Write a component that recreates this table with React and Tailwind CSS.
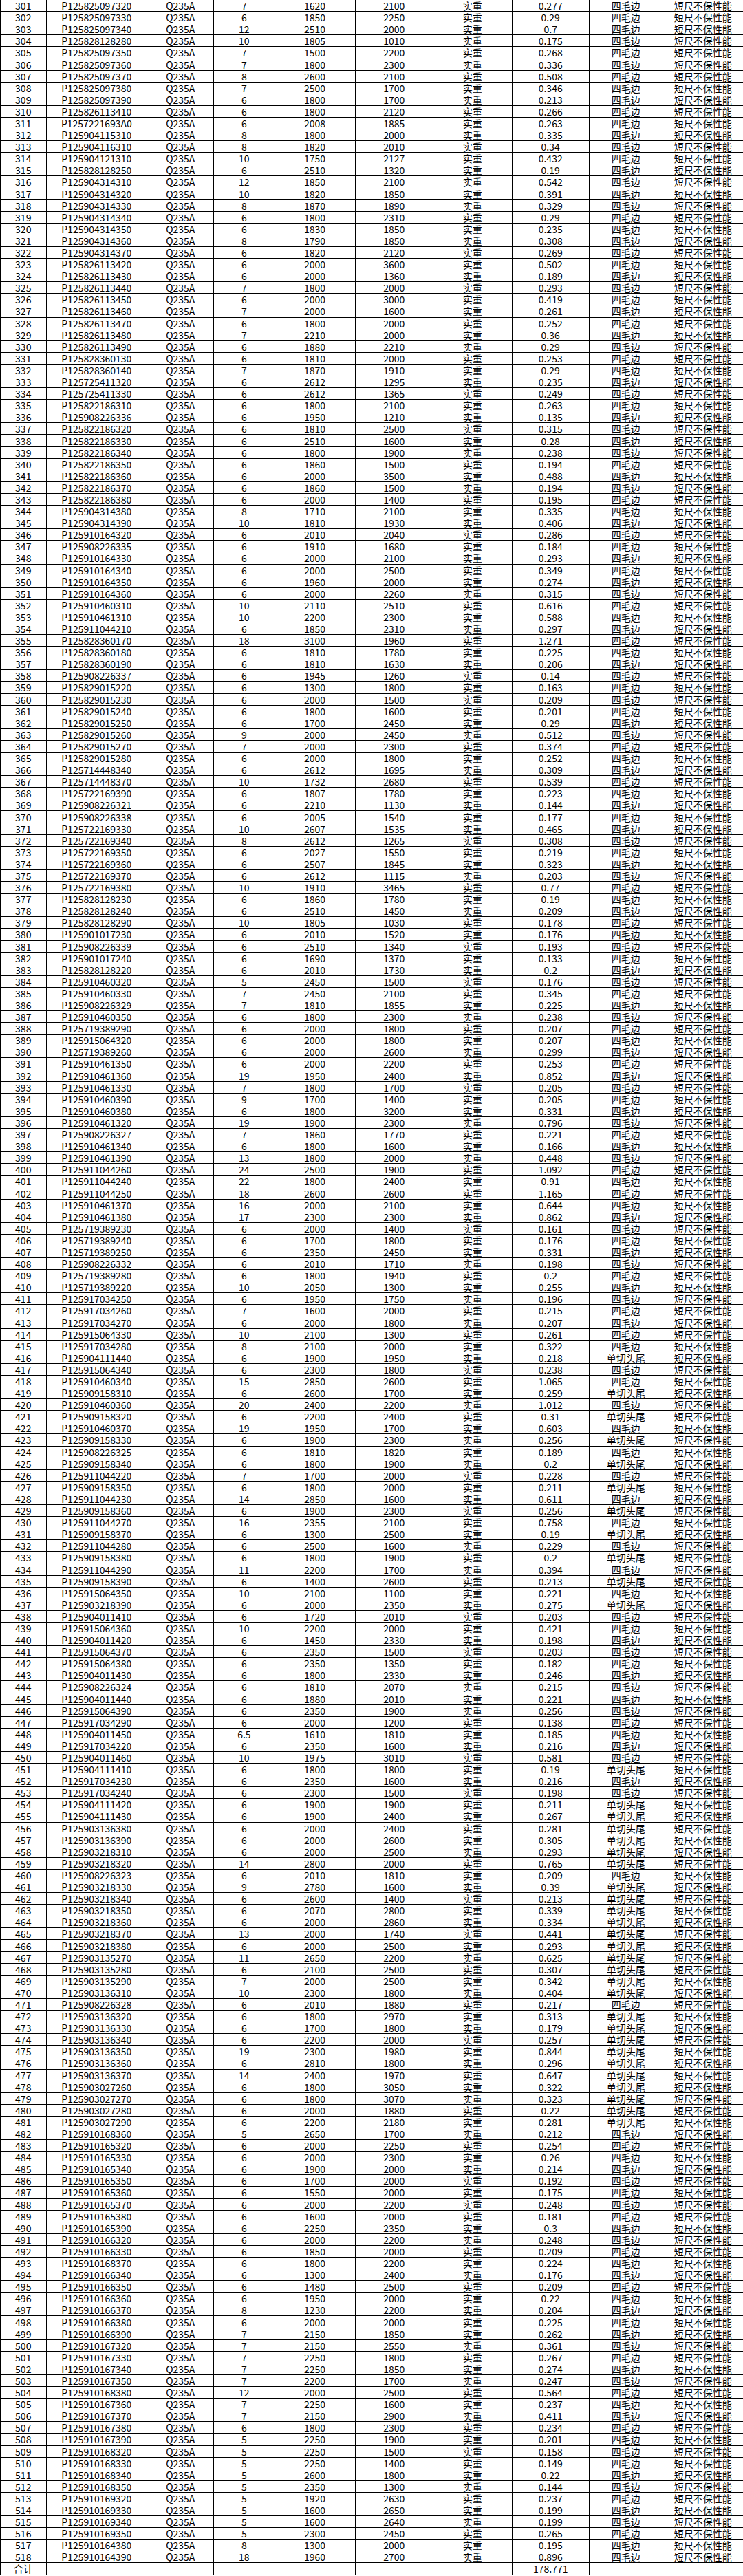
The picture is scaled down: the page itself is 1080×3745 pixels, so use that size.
import React from 'react';

// code qty length width weight edge(0 = 四毛边, 1 = 单切头尾), numbered from 301
const RAW = `P125825097320 7 1620 2100 0.277 0
P125825097330 6 1850 2250 0.29 0
P125825097340 12 2510 2000 0.7 0
P125828128280 10 1805 1010 0.175 0
P125825097350 7 1500 2200 0.268 0
P125825097360 7 1800 2300 0.336 0
P125825097370 8 2600 2100 0.508 0
P125825097380 7 2500 1700 0.346 0
P125825097390 6 1800 1700 0.213 0
P125826113410 6 1800 2120 0.266 0
P1257221693A0 6 2008 1885 0.263 0
P125904115310 8 1800 2000 0.335 0
P125904116310 8 1820 2010 0.34 0
P125904121310 10 1750 2127 0.432 0
P125828128250 6 2510 1320 0.19 0
P125904314310 12 1850 2100 0.542 0
P125904314320 10 1820 1850 0.391 0
P125904314330 8 1870 1890 0.329 0
P125904314340 6 1800 2310 0.29 0
P125904314350 6 1830 1850 0.235 0
P125904314360 8 1790 1850 0.308 0
P125904314370 6 1820 2120 0.269 0
P125826113420 6 2000 3600 0.502 0
P125826113430 6 2000 1360 0.189 0
P125826113440 7 1800 2000 0.293 0
P125826113450 6 2000 3000 0.419 0
P125826113460 7 2000 1600 0.261 0
P125826113470 6 1800 2000 0.252 0
P125826113480 7 2210 2000 0.36 0
P125826113490 6 1880 2210 0.29 0
P125828360130 6 1810 2000 0.253 0
P125828360140 7 1870 1910 0.29 0
P125725411320 6 2612 1295 0.235 0
P125725411330 6 2612 1365 0.249 0
P125822186310 6 1800 2100 0.263 0
P125908226336 6 1950 1210 0.135 0
P125822186320 6 1810 2500 0.315 0
P125822186330 6 2510 1600 0.28 0
P125822186340 6 1800 1900 0.238 0
P125822186350 6 1860 1500 0.194 0
P125822186360 6 2000 3500 0.488 0
P125822186370 6 1860 1500 0.194 0
P125822186380 6 2000 1400 0.195 0
P125904314380 8 1710 2100 0.335 0
P125904314390 10 1810 1930 0.406 0
P125910164320 6 2010 2040 0.286 0
P125908226335 6 1910 1680 0.184 0
P125910164330 6 2000 2100 0.293 0
P125910164340 6 2000 2500 0.349 0
P125910164350 6 1960 2000 0.274 0
P125910164360 6 2000 2260 0.315 0
P125910460310 10 2110 2510 0.616 0
P125910461310 10 2200 2300 0.588 0
P125911044210 6 1850 2310 0.297 0
P125828360170 18 3100 1960 1.271 0
P125828360180 6 1810 1780 0.225 0
P125828360190 6 1810 1630 0.206 0
P125908226337 6 1945 1260 0.14 0
P125829015220 6 1300 1800 0.163 0
P125829015230 6 2000 1500 0.209 0
P125829015240 6 1800 1600 0.201 0
P125829015250 6 1700 2450 0.29 0
P125829015260 9 2000 2450 0.512 0
P125829015270 7 2000 2300 0.374 0
P125829015280 6 2000 1800 0.252 0
P125714448340 6 2612 1695 0.309 0
P125714448370 10 1732 2680 0.539 0
P125722169390 6 1807 1780 0.223 0
P125908226321 6 2210 1130 0.144 0
P125908226338 6 2005 1540 0.177 0
P125722169330 10 2607 1535 0.465 0
P125722169340 8 2612 1265 0.308 0
P125722169350 6 2027 1550 0.219 0
P125722169360 6 2507 1845 0.323 0
P125722169370 6 2612 1115 0.203 0
P125722169380 10 1910 3465 0.77 0
P125828128230 6 1860 1780 0.19 0
P125828128240 6 2510 1450 0.209 0
P125828128290 10 1805 1030 0.178 0
P125901017230 6 2010 1520 0.176 0
P125908226339 6 2510 1340 0.193 0
P125901017240 6 1690 1370 0.133 0
P125828128220 6 2010 1730 0.2 0
P125910460320 5 2450 1500 0.176 0
P125910460330 7 2450 2100 0.345 0
P125908226329 7 1810 1855 0.225 0
P125910460350 6 1800 2300 0.238 0
P125719389290 6 2000 1800 0.207 0
P125915064320 6 2000 1800 0.207 0
P125719389260 6 2000 2600 0.299 0
P125910461350 6 2000 2200 0.253 0
P125910461360 19 1950 2400 0.852 0
P125910461330 7 1800 1700 0.205 0
P125910460390 9 1700 1400 0.205 0
P125910460380 6 1800 3200 0.331 0
P125910461320 19 1900 2300 0.796 0
P125908226327 7 1860 1770 0.221 0
P125910461340 6 1800 1600 0.166 0
P125910461390 13 1800 2000 0.448 0
P125911044260 24 2500 1900 1.092 0
P125911044240 22 1800 2400 0.91 0
P125911044250 18 2600 2600 1.165 0
P125910461370 16 2000 2100 0.644 0
P125910461380 17 2300 2300 0.862 0
P125719389230 6 2000 1400 0.161 0
P125719389240 6 1700 1800 0.176 0
P125719389250 6 2350 2450 0.331 0
P125908226332 6 2010 1710 0.198 0
P125719389280 6 1800 1940 0.2 0
P125719389220 10 2050 1300 0.255 0
P125917034250 6 1950 1750 0.196 0
P125917034260 7 1600 2000 0.215 0
P125917034270 6 2000 1800 0.207 0
P125915064330 10 2100 1300 0.261 0
P125917034280 8 2100 2000 0.322 0
P125904111440 6 1900 1950 0.218 1
P125915064340 6 2300 1800 0.238 0
P125910460340 15 2850 2600 1.065 0
P125909158310 6 2600 1700 0.259 1
P125910460360 20 2400 2200 1.012 0
P125909158320 6 2200 2400 0.31 1
P125910460370 19 1950 1700 0.603 0
P125909158330 6 1900 2300 0.256 1
P125908226325 6 1810 1820 0.189 0
P125909158340 6 1800 1900 0.2 1
P125911044220 7 1700 2000 0.228 0
P125909158350 6 1800 2000 0.211 1
P125911044230 14 2850 1600 0.611 0
P125909158360 6 1900 2300 0.256 1
P125911044270 16 2355 2100 0.758 0
P125909158370 6 1300 2500 0.19 1
P125911044280 6 2500 1600 0.229 0
P125909158380 6 1800 1900 0.2 1
P125911044290 11 2200 1700 0.394 0
P125909158390 6 1400 2600 0.213 1
P125915064350 10 2100 1100 0.221 0
P125903218390 6 2000 2350 0.275 1
P125904011410 6 1720 2010 0.203 0
P125915064360 10 2200 2000 0.421 0
P125904011420 6 1450 2330 0.198 0
P125915064370 6 2350 1500 0.203 0
P125915064380 6 2350 1350 0.182 0
P125904011430 6 1800 2330 0.246 0
P125908226324 6 1810 2070 0.215 0
P125904011440 6 1880 2010 0.221 0
P125915064390 6 2350 1900 0.256 0
P125917034290 6 2000 1200 0.138 0
P125904011450 6.5 1610 1810 0.185 0
P125917034220 6 2350 1600 0.216 0
P125904011460 10 1975 3010 0.581 0
P125904111410 6 1800 1800 0.19 1
P125917034230 6 2350 1600 0.216 0
P125917034240 6 2300 1500 0.198 0
P125904111420 6 1900 1900 0.211 1
P125904111430 6 1900 2400 0.267 1
P125903136380 6 2000 2400 0.281 1
P125903136390 6 2000 2600 0.305 1
P125903218310 6 2000 2500 0.293 1
P125903218320 14 2800 2000 0.765 1
P125908226323 6 2010 1810 0.209 0
P125903218330 9 2780 1600 0.39 1
P125903218340 6 2600 1400 0.213 1
P125903218350 6 2070 2800 0.339 1
P125903218360 6 2000 2860 0.334 1
P125903218370 13 2000 1740 0.441 1
P125903218380 6 2000 2500 0.293 1
P125903135270 11 2650 2200 0.625 1
P125903135280 6 2100 2500 0.307 1
P125903135290 7 2000 2500 0.342 1
P125903136310 10 2300 1800 0.404 1
P125908226328 6 2010 1880 0.217 0
P125903136320 6 1800 2970 0.313 1
P125903136330 6 1700 1800 0.179 1
P125903136340 6 2200 2000 0.257 1
P125903136350 19 2300 1980 0.844 1
P125903136360 6 2810 1800 0.296 1
P125903136370 14 2400 1970 0.647 1
P125903027260 6 1800 3050 0.322 1
P125903027270 6 1800 3070 0.323 1
P125903027280 6 2000 1880 0.22 1
P125903027290 6 2200 2180 0.281 1
P125910168360 5 2650 1700 0.212 0
P125910165320 6 2000 2250 0.254 0
P125910165330 6 2000 2300 0.26 0
P125910165340 6 1900 2000 0.214 0
P125910165350 6 1700 2000 0.192 0
P125910165360 6 1550 2000 0.175 0
P125910165370 6 2000 2200 0.248 0
P125910165380 6 1600 2000 0.181 0
P125910165390 6 2250 2350 0.3 0
P125910166320 6 2000 2200 0.248 0
P125910166330 6 1850 2000 0.209 0
P125910168370 6 1800 2200 0.224 0
P125910166340 6 1300 2400 0.176 0
P125910166350 6 1480 2500 0.209 0
P125910166360 6 1950 2000 0.22 0
P125910166370 8 1230 2200 0.204 0
P125910166380 6 2000 2000 0.225 0
P125910166390 7 2150 1850 0.262 0
P125910167320 7 2150 2550 0.361 0
P125910167330 7 2250 1800 0.267 0
P125910167340 7 2250 1850 0.274 0
P125910167350 7 2200 1700 0.247 0
P125910168380 12 2000 2500 0.564 0
P125910167360 7 2250 1600 0.237 0
P125910167370 7 2150 2900 0.411 0
P125910167380 6 1800 2300 0.234 0
P125910167390 5 2250 1900 0.201 0
P125910168320 5 2250 1500 0.158 0
P125910168330 5 2250 1400 0.149 0
P125910168340 5 2600 1800 0.22 0
P125910168350 5 2350 1300 0.144 0
P125910169320 5 1920 2630 0.237 0
P125910169330 5 1600 2650 0.199 0
P125910169340 5 1600 2640 0.199 0
P125910169350 5 2300 2450 0.265 0
P125910164380 8 1300 2000 0.195 0
P125910164390 18 1960 2700 0.896 0`;

const rows = RAW.trim().split('\n').map((line, i) => {
  const [code, qty, len, wid, wt, edge] = line.trim().split(' ');
  return [String(301 + i), code, 'Q235A', qty, len, wid, '实重', wt, edge === '1' ? '单切头尾' : '四毛边', '短尺不保性能'];
});

const total = ['合计', '', '', '', '', '', '', '178.771', '', ''];

const gridCols = 'grid grid-cols-[67.5px_146.7px_97.1px_88.2px_117.1px_113.6px_114.4px_112.3px_106.7px_1fr]';

const Row = ({ cells }) => (
  <div className={`${gridCols} h-[17.1px] border-b border-black`}>
    {cells.map((c, i) => (
      <div
        key={i}
        className={`flex items-center justify-center whitespace-nowrap pt-px ${i < 9 ? 'border-r border-black' : ''} ${i === 0 ? 'border-l border-black' : ''}`}
      >
        <span className="leading-[15px]">{c}</span>
      </div>
    ))}
  </div>
);

export default function App() {
  return (
    <div className="w-[1080px] h-[3745px] bg-white text-black text-[14px] font-['Noto_Sans_CJK_SC',sans-serif] overflow-hidden">
      {rows.map((r) => (
        <Row key={r[0]} cells={r} />
      ))}
      <Row cells={total} />
    </div>
  );
}
